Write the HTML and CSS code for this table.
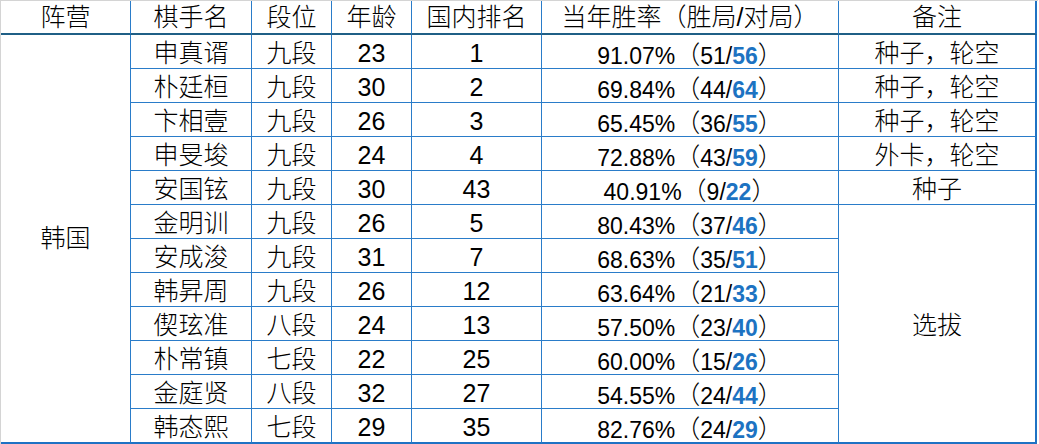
FILE: index.html
```html
<!DOCTYPE html>
<html lang="zh">
<head>
<meta charset="utf-8">
<title>韩国棋手</title>
<link rel="stylesheet" href="styles.css">
</head>
<body>
<div class="sheet">
  <div class="cell hd">阵营</div>
  <div class="cell hd">棋手名</div>
  <div class="cell hd">段位</div>
  <div class="cell hd">年龄</div>
  <div class="cell hd">国内排名</div>
  <div class="cell hd">当年胜率（胜局/对局）</div>
  <div class="cell hd end">备注</div>

  <div class="cell camp">韩国</div>

  <div class="cell">申真谞</div><div class="cell">九段</div><div class="cell">23</div><div class="cell">1</div><div class="cell rate"><span class="n">91.07%</span>（<span class="n">51/</span><b>56</b>）</div><div class="cell end">种子，轮空</div>
  <div class="cell">朴廷桓</div><div class="cell">九段</div><div class="cell">30</div><div class="cell">2</div><div class="cell rate"><span class="n">69.84%</span>（<span class="n">44/</span><b>64</b>）</div><div class="cell end">种子，轮空</div>
  <div class="cell">卞相壹</div><div class="cell">九段</div><div class="cell">26</div><div class="cell">3</div><div class="cell rate"><span class="n">65.45%</span>（<span class="n">36/</span><b>55</b>）</div><div class="cell end">种子，轮空</div>
  <div class="cell">申旻埈</div><div class="cell">九段</div><div class="cell">24</div><div class="cell">4</div><div class="cell rate"><span class="n">72.88%</span>（<span class="n">43/</span><b>59</b>）</div><div class="cell end">外卡，轮空</div>
  <div class="cell">安国铉</div><div class="cell">九段</div><div class="cell">30</div><div class="cell">43</div><div class="cell rate"><span class="n">40.91%</span>（<span class="n">9/</span><b>22</b>）</div><div class="cell end">种子</div>
  <div class="cell">金明训</div><div class="cell">九段</div><div class="cell">26</div><div class="cell">5</div><div class="cell rate"><span class="n">80.43%</span>（<span class="n">37/</span><b>46</b>）</div><div class="cell end sel">选拔</div>
  <div class="cell">安成浚</div><div class="cell">九段</div><div class="cell">31</div><div class="cell">7</div><div class="cell rate"><span class="n">68.63%</span>（<span class="n">35/</span><b>51</b>）</div>
  <div class="cell">韩昇周</div><div class="cell">九段</div><div class="cell">26</div><div class="cell">12</div><div class="cell rate"><span class="n">63.64%</span>（<span class="n">21/</span><b>33</b>）</div>
  <div class="cell">偰玹准</div><div class="cell">八段</div><div class="cell">24</div><div class="cell">13</div><div class="cell rate"><span class="n">57.50%</span>（<span class="n">23/</span><b>40</b>）</div>
  <div class="cell">朴常镇</div><div class="cell">七段</div><div class="cell">22</div><div class="cell">25</div><div class="cell rate"><span class="n">60.00%</span>（<span class="n">15/</span><b>26</b>）</div>
  <div class="cell">金庭贤</div><div class="cell">八段</div><div class="cell">32</div><div class="cell">27</div><div class="cell rate"><span class="n">54.55%</span>（<span class="n">24/</span><b>44</b>）</div>
  <div class="cell last">韩态熙</div><div class="cell last">七段</div><div class="cell last">29</div><div class="cell last">35</div><div class="cell rate last"><span class="n">82.76%</span>（<span class="n">24/</span><b>29</b>）</div>
</div>
</body>
</html>
```

FILE: styles.css
```css
html, body {
  margin: 0;
  padding: 0;
  background: #ffffff;
}

.sheet {
  display: grid;
  grid-template-columns: 130px 121px 80px 80px 130px 297px 198px;
  grid-template-rows: 34px repeat(11, 34px) 35px;
  width: 1037px;
  border-top: 1px solid #d4d4d4;
  border-left: 1px solid #d4d4d4;
  font-family: "Liberation Sans", "Noto Sans CJK SC", sans-serif;
  font-size: 25px;
  font-weight: 300;
  color: #000000;
}

.cell {
  box-sizing: border-box;
  display: flex;
  align-items: center;
  justify-content: center;
  padding-top: 3px;
  border-right: 1px solid #2a7cc9;
  border-bottom: 1px solid #2a7cc9;
  white-space: nowrap;
  line-height: 1;
}

.rate {
  align-items: baseline;
  padding-top: 8px;
}

.rate .n,
.rate b {
  font-size: 23px;
}

.cell b {
  color: #1d73c2;
  font-weight: bold;
}

.hd {
  border-bottom: 2px solid #1f5f86;
  padding-top: 0;
}

.end {
  border-right: 2px solid #1f72c4;
}

.camp {
  grid-column: 1;
  grid-row: 2 / span 12;
  border-bottom: 2px solid #1f72c4;
  padding-top: 0;
}

.sel {
  grid-row: span 7;
  border-bottom: 2px solid #1f72c4;
}

.last {
  border-bottom: 2px solid #1f72c4;
}
```
